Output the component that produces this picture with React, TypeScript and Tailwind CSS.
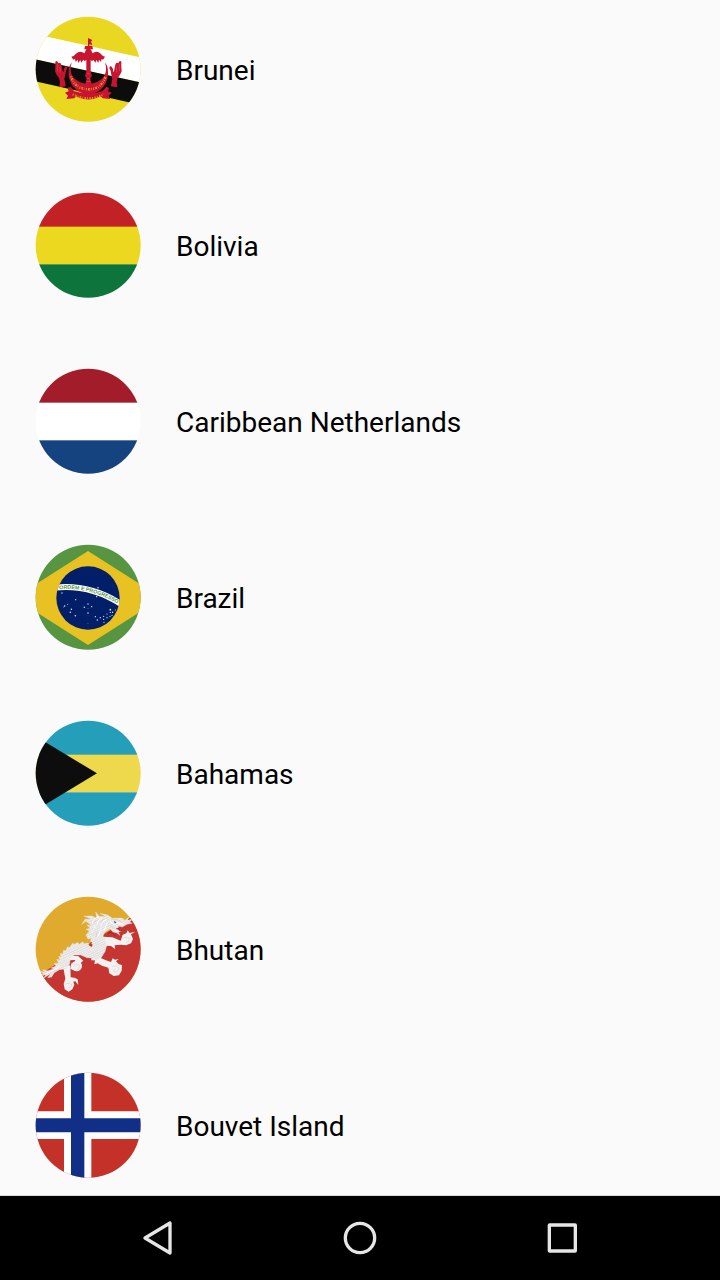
import { useId } from "react";
import type { ReactNode } from "react";

function Disc({ children }: { children: ReactNode }) {
  const id = useId();
  return (
    <svg viewBox="21 18 318 318" className="size-[106px] shrink-0" aria-hidden="true">
      <defs>
        <clipPath id={id}>
          <circle cx="180.5" cy="178" r="157.5" />
        </clipPath>
      </defs>
      <g clipPath={`url(#${id})`}>{children}</g>
    </svg>
  );
}

function Bands({ colors }: { colors: [string, string, string] }) {
  return (
    <>
      <rect x="0" y="0" width="360" height="123" fill={colors[0]} />
      <rect x="0" y="122" width="360" height="113" fill={colors[1]} />
      <rect x="0" y="235" width="360" height="125" fill={colors[2]} />
    </>
  );
}

const hand =
  "M82 155 Q85 151 89 155 L91 160 Q96 155 99 162 L101 168 L104 184 L107 186 Q106 174 111 170 Q118 167 118 174 Q112 184 112 194 L109 207 L111 216 L113 229 L94 232 L96 216 Q96 204 86 194 L81 184 L82 171 Z";

function Brunei() {
  return (
    <Disc>
      <rect x="0" y="0" width="360" height="360" fill="#ead722" />
      <path d="M0 67 L360 147 V222 L0 143Z" fill="#fff" />
      <path d="M0 143 L360 222 V290 L0 209Z" fill="#0c0c0c" />
      <g fill="#c8142f">
        <path d={hand} />
        <path d={hand} transform="matrix(-1 0 0 1 362 0)" />
        <path d="M180 84 L193 90 L189 95 L193 105 L184 103 V110 H180Z" />
        <path d="M171 108 H193 L195 118 H188 L187 125 H176 L175 118 H169Z" />
        <path d="M173 121 Q181 115 190 121 L193 130 Q207 120 218 131 Q225 140 231 140 L225 149 L221 147 L219 156 L213 149 L211 159 L205 150 L202 158 L196 149 L192 154 L188 149 V186 L192 197 L187 205 L190 223 H172 L176 205 L171 197 L175 186 V149 L170 154 L166 149 L160 158 L157 150 L151 159 L149 149 L143 156 L141 147 L136 149 L130 140 Q137 140 144 131 Q155 120 170 130Z" />
        <path d="M131 157 Q117 176 124 206 Q133 237 160 248 Q181 257 202 248 Q229 237 238 206 Q245 176 231 157 Q238 181 229 198 Q213 221 181 221 Q149 221 133 198 Q124 181 131 157Z" />
        <path d="M127 230 L119 234 L122 244 L111 248 L120 257 L115 267 L139 265 L144 259 Q181 278 218 259 L224 265 L247 267 L242 257 L251 248 L240 244 L243 234 L235 230 L224 243 Q181 258 138 243Z" />
      </g>
      <g fill="none" stroke="#e7a52c">
        <path d="M129 199 Q141 237 181 238 Q221 237 233 199" strokeWidth="7" strokeDasharray="3 3 6 3 2 4" />
        <path d="M134 253 Q181 277 228 253" strokeWidth="6" strokeDasharray="3 4 5 3" />
      </g>
      <g fill="none" stroke="#c8142f" strokeWidth="2">
        <path d="M129 199 Q141 237 181 238 Q221 237 233 199" strokeDasharray="5 3" />
        <path d="M134 254 Q181 276 228 254" strokeDasharray="4 3" />
      </g>
      <g fill="none" stroke="#e98b8f" strokeWidth="1">
        <path d="M88 162 V184 M96 168 V187 M274 162 V184 M266 168 V187" />
        <path d="M177 206 H186 M176 214 H187 M177 190 H186" />
      </g>
    </Disc>
  );
}

const stars = [
  [102, 165, 2], [143, 185, 2], [110, 204, 2.3], [119, 199, 1.5], [130, 214, 2.3],
  [127, 223, 2.3], [142, 233, 2.3], [169, 208, 2.2], [180, 198, 2], [191, 206, 2],
  [180, 212, 1.2], [180, 225, 2.3], [206, 176, 2], [210, 149, 2.3], [180, 257, 1],
  [202, 236, 2], [208, 246, 2.2], [217, 239, 2], [227, 235, 1.8], [227, 244, 1.8],
  [228, 253, 1.8], [237, 239, 1.8], [237, 228, 1.8], [247, 215, 2.6], [247, 223, 2],
  [246, 235, 1.8], [254, 223, 2.2], [262, 216, 1.8], [252, 232, 1.8], [106, 207, 1.2],
];

function Brazil() {
  return (
    <Disc>
      <rect x="0" y="0" width="360" height="360" fill="#579543" />
      <path d="M180 39 L402 180 L180 321 L-42 180Z" fill="#e8c222" />
      <circle cx="180" cy="180" r="95" fill="#011f69" />
      <clipPath id="celestial-globe">
        <circle cx="180" cy="180" r="95" />
      </clipPath>
      <g clipPath="url(#celestial-globe)">
        <path d="M80 149 Q187 138 280 199" fill="none" stroke="#fff" strokeWidth="18" />
      </g>
      <path id="motto-line" d="M92 154 Q190 144 290 210" fill="none" />
      <text fontFamily="Liberation Sans, Arial, sans-serif" fontSize="16" fontWeight="700" fill="#579543">
        <textPath href="#motto-line" startOffset="2">ORDEM E PROGRESSO</textPath>
      </text>
      <g fill="#e4e8f2">
        {stars.map(([x, y, r]) => (
          <circle key={`${x}-${y}`} cx={x} cy={y} r={r} />
        ))}
      </g>
    </Disc>
  );
}

function Bhutan() {
  return (
    <Disc>
      <defs>
        <pattern id="scales" width="7" height="6" patternUnits="userSpaceOnUse" patternTransform="rotate(-25)">
          <rect width="7" height="6" fill="#f3f2f2" />
          <path d="M0 0 Q3.500 7 7 0" fill="none" stroke="#b4b0ae" strokeWidth="1" />
        </pattern>
      </defs>
      <rect x="0" y="0" width="360" height="360" fill="#dfaa2d" />
      <path d="M0 276 L360 50 V360 H0Z" fill="#c53532" />
      <g fill="#f3f2f1">
        <path d="M128 197 L150 198 L166 212 L151 224 L140 210 L124 211Z" />
        <path d="M105 228 L127 226 L128 262 L139 263 L149 268 L151 285 L142 274 L136 275 L139 284 L133 298 L122 305 L110 298 L107 282 L112 266Z" />
        <path d="M193 194 L213 202 L234 211 L249 216 L254 205 L261 209 L272 207 L264 214 L273 223 L282 225 L281 242 L273 256 L257 258 L244 250 L241 233 L222 227 L209 220 L199 223 L201 211 L189 211Z" />
        <path d="M225 140 L253 142 L278 152 L284 134 L295 130 L299 121 L305 129 L322 125 L309 133 L315 147 L309 160 L294 166 L279 164 L260 166 L261 177 L249 168 L226 167Z" />
        <circle cx="146" cy="228" r="16" />
        <path d="M131 217 L127 236 L136 241Z" />
      </g>
      <path
        d="M174 135 L184 123 L174 118 L187 115 L176 105 L191 107 L174 94 L161 103 L171 88 L189 87 L168 78 L193 78 L207 86 L203 66 L214 79 L233 80 L216 70 L239 75 L253 85 L282 84 L291 91 L302 82 L299 91 L314 87 L305 96 L313 100 L297 103 L283 111 L272 109 L268 119 L281 123 L271 127 L276 136 L265 128 L255 126 L246 116 L238 121 L229 128 L225 139 L232 147 L236 167 L231 185 L219 204 L202 211 L192 204 L177 203 L158 195 L139 195 L127 203 L125 222 L114 236 L94 239 L79 248 L71 261 L59 263 L68 251 L47 264 L55 252 L42 258 L44 248 L37 244 L52 247 L43 239 L59 242 L77 236 L69 234 L84 228 L78 221 L92 219 L86 208 L96 210 L92 199 L99 201 L97 190 L105 192 L106 181 L114 182 L118 170 L124 173 L134 160 L140 163 L148 157 L154 163 L164 155 L168 161 L180 159 L188 164 L193 158 L187 153 L191 144 L180 147Z"
        fill="url(#scales)"
        stroke="#f1efee"
        strokeWidth="1"
      />
      <g fill="none" stroke="#fff" strokeWidth="3">
        <path d="M214 80 Q198 82 193 99 M225 82 Q207 90 208 104 M235 89 Q220 95 219 109 M202 107 L190 129 M219 118 L208 143 M238 98 L227 123" />
        <path d="M245 94 L258 104 L270 99 L286 103 M51 253 L76 240 L94 229" />
      </g>
      <g fill="none" stroke="#b9b4b2" strokeWidth="1">
        <path d="M205 90 L199 98 M228 84 L217 99 M197 115 L191 123 M208 126 L203 143 M251 88 L267 89 L280 94 M246 108 L261 115" />
        <path d="M137 227 Q144 219 153 225 Q157 235 147 238 M114 282 Q123 275 131 284 Q130 296 119 294 M252 230 Q263 223 273 233 Q272 248 260 246 Q252 241 262 236 M286 146 Q291 138 304 144 Q307 154 294 158" />
      </g>
      <path d="M258 93 L264 96 L261 101Z" fill="#333" />
      <path d="M265 116 L272 116 L276 123 L282 121 M239 130 L246 126 L253 130 L262 137" fill="none" stroke="#a9191f" strokeWidth="3" />
      <path d="M181 164 Q189 158 194 165 L190 171Z" fill="#c53532" />
    </Disc>
  );
}

function Bahamas() {
  return (
    <Disc>
      <Bands colors={["#259eb9", "#eed84c", "#259eb9"]} />
      <path d="M-2 52 L207 178 L-2 304Z" fill="#0d0d0d" />
    </Disc>
  );
}

function Bouvet() {
  return (
    <Disc>
      <rect x="0" y="0" width="360" height="360" fill="#c33128" />
      <path d="M108 0 H190 V136 H360 V219 H190 V360 H108 V219 H0 V136 H108Z" fill="#fff" />
      <path d="M129 0 H169 V157 H360 V199 H169 V360 H129 V199 H0 V157 H129Z" fill="#112f87" />
    </Disc>
  );
}

const countries: { name: string; flag: ReactNode }[] = [
  { name: "Brunei", flag: <Brunei /> },
  { name: "Bolivia", flag: <Disc><Bands colors={["#c22126", "#ecd91f", "#0d743c"]} /></Disc> },
  { name: "Caribbean Netherlands", flag: <Disc><Bands colors={["#a31c29", "#ffffff", "#144380"]} /></Disc> },
  { name: "Brazil", flag: <Brazil /> },
  { name: "Bahamas", flag: <Bahamas /> },
  { name: "Bhutan", flag: <Bhutan /> },
  { name: "Bouvet Island", flag: <Bouvet /> },
];

const navItems: { label: string; shape: ReactNode }[] = [
  { label: "Back", shape: <path d="M21 60 L96 15 V105Z" /> },
  { label: "Home", shape: <circle cx="60" cy="60" r="44" /> },
  { label: "Recent apps", shape: <rect x="22" y="21" width="78" height="78" rx="1" /> },
];

export default function App() {
  return (
    <div className="flex min-h-screen flex-col bg-[#fafafa] font-['Roboto',sans-serif] text-black">
      <main className="flex-1 border-b border-[#d5dcda] pt-4 pb-[17px]">
        <ul className="flex flex-col gap-[70px]">
          {countries.map(({ name, flag }) => (
            <li key={name} className="flex items-center gap-[35px] px-[35px]">
              {flag}
              <span className="pt-1 text-[28px] leading-8">{name}</span>
            </li>
          ))}
        </ul>
      </main>
      <nav className="flex h-[84px] shrink-0 items-center justify-center bg-black" aria-label="System">
        {navItems.map(({ label, shape }) => (
          <button key={label} type="button" aria-label={label} className="flex h-full w-[28%] items-center justify-center">
            <svg
              viewBox="0 0 120 120"
              className="size-10"
              fill="none"
              stroke="#e6e6e6"
              strokeWidth="10"
              strokeLinejoin="round"
              aria-hidden="true"
            >
              {shape}
            </svg>
          </button>
        ))}
      </nav>
    </div>
  );
}
